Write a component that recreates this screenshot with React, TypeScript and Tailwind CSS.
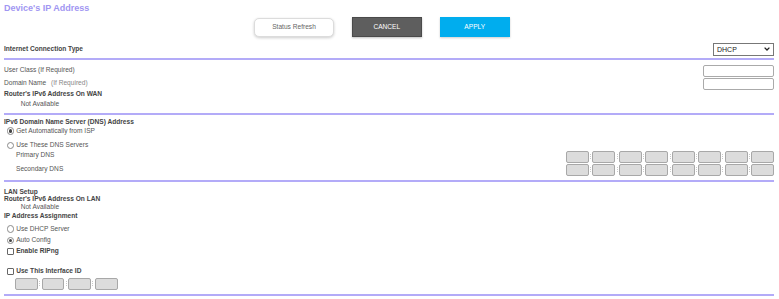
import React from "react";

function Line() {
  return <div className="h-[2px] bg-[#b3abf8]" />;
}

function Radio({ checked, label }: { checked?: boolean; label: string }) {
  return (
    <div className="flex items-center ml-[2.7px]">
      <span className="h-[7.5px] w-[7.5px] rounded-full border border-[#8a8a8a] bg-white flex items-center justify-center shrink-0">
        {checked && <span className="h-[3.5px] w-[3.5px] rounded-full bg-[#444]" />}
      </span>
      <span className="ml-[2px] text-[#555]">{label}</span>
    </div>
  );
}

function Check({ label }: { label: string }) {
  return (
    <div className="flex items-center ml-[2.7px]">
      <span className="h-[7.5px] w-[7.5px] rounded-[1px] border border-[#666] bg-white shrink-0" />
      <span className="ml-[2px] font-bold text-[#444]">{label}</span>
    </div>
  );
}

function Boxes({ count, w, sep }: { count: number; w: string; sep: string }) {
  return (
    <div className="flex items-center">
      {Array.from({ length: count }).map((_, i) => (
        <React.Fragment key={i}>
          {i > 0 && (
            <span className={`${sep} flex flex-col items-center gap-[1px]`}>
              <span className="h-[1px] w-[1px] bg-[#c8c8c8]" />
              <span className="h-[1px] w-[1px] bg-[#c8c8c8]" />
              <span className="h-[1px] w-[1px] bg-[#c8c8c8]" />
            </span>
          )}
          <span className={`${w} h-[12px] rounded-[2px] border border-[#a8a8a8] bg-[#dcdcdc]`} />
        </React.Fragment>
      ))}
    </div>
  );
}

export default function App() {
  return (
    <div className="w-[779px] h-[299px] bg-white overflow-hidden pl-[4px] pr-[5px] font-['Liberation_Sans',Arial,sans-serif] text-[6.6px] leading-none text-[#555]">
      {/* header */}
      <div className="h-[17px] flex items-center text-[9px] font-bold text-[#a196f2]">Device's IP Address</div>
      <div className="h-[20px] flex items-center pl-[250px]">
        <button className="h-[19px] w-[80px] rounded-[5px] border border-[#dcdcdc] bg-white shadow-[0_1px_3px_rgba(0,0,0,0.2)] text-[#666]">Status Refresh</button>
        <button className="ml-[17.5px] h-[19.5px] w-[70.5px] border border-[#4a4a4a] bg-[#5e5e5e] shadow-[0_1px_2px_rgba(0,0,0,0.25)] text-white">CANCEL</button>
        <button className="ml-[17.5px] h-[19.5px] w-[70.5px] bg-[#00adee] shadow-[0_1px_2px_rgba(0,0,0,0.2)] text-white">APPLY</button>
      </div>

      {/* connection type */}
      <div className="h-[21px] pt-[3px] flex items-center justify-between">
        <span className="font-bold text-[#444]">Internet Connection Type</span>
        <div className="h-[13px] w-[61px] border border-[#777] bg-white flex items-center justify-between pl-[3px] pr-[3px] text-[#222] text-[7px]">
          <span>DHCP</span>
          <svg width="6" height="4" viewBox="0 0 6 4">
            <path d="M0.6 0.6 L3 3 L5.4 0.6" stroke="#222" strokeWidth="1.3" fill="none" />
          </svg>
        </div>
      </div>
      <Line />

      <div className="h-[4px]" />
      <div className="h-[13px] flex items-center justify-between">
        <span>User Class (If Required)</span>
        <span className="h-[12px] w-[71.5px] rounded-[2px] border border-[#aaa] bg-white" />
      </div>
      <div className="h-[13px] flex items-center justify-between">
        <span>
          Domain Name <span className="ml-[3px] text-[#888]">(If Required)</span>
        </span>
        <span className="h-[12px] w-[71.5px] rounded-[2px] border border-[#aaa] bg-white" />
      </div>
      <div className="h-[8px] flex items-center font-bold text-[#444]">Router's IPv6 Address On WAN</div>
      <div className="h-[13px] flex items-center pl-[16.7px]">Not Available</div>
      <div className="h-[2px]" />
      <Line />

      {/* DNS */}
      <div className="h-[2px]" />
      <div className="h-[10px] flex items-center font-bold text-[#444]">IPv6 Domain Name Server (DNS) Address</div>
      <div className="h-[8px] flex items-center">
        <Radio checked label="Get Automatically from ISP" />
      </div>
      <div className="h-[6px]" />
      <div className="h-[9px] flex items-center">
        <Radio label="Use These DNS Servers" />
      </div>
      <div className="h-[13px] flex items-center justify-between">
        <span className="pl-[12px] pb-[2px]">Primary DNS</span>
        <Boxes count={8} w="w-[23px]" sep="w-[3.43px]" />
      </div>
      <div className="h-[13px] flex items-center justify-between">
        <span className="pl-[12px] pb-[1px]">Secondary DNS</span>
        <Boxes count={8} w="w-[23px]" sep="w-[3.43px]" />
      </div>
      <div className="h-[4px]" />
      <Line />

      {/* LAN */}
      <div className="h-[6px]" />
      <div className="h-[8px] flex items-center font-bold text-[#444]">LAN Setup</div>
      <div className="h-[7px] flex items-center font-bold text-[#444]">Router's IPv6 Address On LAN</div>
      <div className="h-[9px] flex items-center pl-[16.7px]">Not Available</div>
      <div className="h-[9px] flex items-center font-bold text-[#444]">IP Address Assignment</div>
      <div className="h-[2px]" />
      <div className="h-[12px] flex items-center">
        <Radio label="Use DHCP Server" />
      </div>
      <div className="h-[11px] flex items-center">
        <Radio checked label="Auto Config" />
      </div>
      <div className="h-[11px] flex items-center">
        <Check label="Enable RIPng" />
      </div>
      <div className="h-[9px]" />
      <div className="h-[11px] flex items-center">
        <Check label="Use This Interface ID" />
      </div>
      <div className="h-[13px] flex items-center pl-[11px]">
        <Boxes count={4} w="w-[22.5px]" sep="w-[4.2px]" />
      </div>
      <div className="h-[4px]" />
      <Line />
    </div>
  );
}
